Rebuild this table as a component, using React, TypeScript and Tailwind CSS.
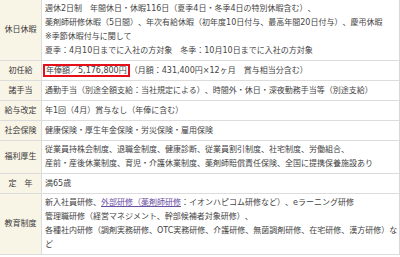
import type { ReactNode } from "react";

type Row = { label: string; body: ReactNode; one?: boolean };

const rows: Row[] = [
  {
    label: "休日休暇",
    body: (
      <>
        週休2日制　年間休日・休暇116日（夏季4日・冬季4日の特別休暇含む）、
        <br />
        薬剤師研修休暇（5日間）、年次有給休暇（初年度10日付与、最高年間20日付与）、慶弔休暇
        <br />
        ※季節休暇付与に関して
        <br />
        夏季：4月10日までに入社の方対象　冬季：10月10日までに入社の方対象
      </>
    ),
  },
  {
    label: "初任給",
    one: true,
    body: (
      <>
        <span className="inline-block -ml-[2px] border-2 border-[#e5101a] px-px leading-[9px]">
          年俸額／5,176,800円
        </span>
        （月額：431,400円×12ヶ月　賞与相当分含む）
      </>
    ),
  },
  {
    label: "諸手当",
    one: true,
    body: "通勤手当（別途全額支給：当社規定による）、時間外・休日・深夜勤務手当等（別途支給）",
  },
  { label: "給与改定", one: true, body: "年1回（4月）賞与なし（年俸に含む）" },
  { label: "社会保険", one: true, body: "健康保険・厚生年金保険・労災保険・雇用保険" },
  {
    label: "福利厚生",
    body: (
      <>
        従業員持株会制度、退職金制度、健康診断、従業員割引制度、社宅制度、労働組合、
        <br />
        産前・産後休業制度、育児・介護休業制度、薬剤師賠償責任保険、全国に提携保養施設あり
      </>
    ),
  },
  { label: "定　年", one: true, body: "満65歳" },
  {
    label: "教育制度",
    body: (
      <>
        新入社員研修、
        <a href="#" className="text-[#6a4fa3] underline">
          外部研修（薬剤師研修
        </a>
        ：イオンハピコム研修など）、eラーニング研修
        <br />
        管理職研修（経営マネジメント、幹部候補者対象研修）、
        <br />
        各種社内研修（調剤実務研修、OTC実務研修、介護研修、無菌調剤研修、在宅研修、漢方研修）な
        <br />
        ど
      </>
    ),
  },
];

export default function App() {
  return (
    <div className="w-[400px] h-[257px] overflow-hidden bg-white font-['DejaVu_Sans','Noto_Sans_CJK_JP',sans-serif] text-[8px] [text-spacing-trim:space-all]">
      <div className="border-r border-[#d8d8d8]">
        {rows.map((r) => (
          <div key={r.label} className="flex border-b border-[#dcdcdc]">
            <div className="w-[42px] shrink-0 bg-[#f8f4e6] border-r border-[#dcdcdc] flex items-center justify-center text-[#3a3a3a]">
              {r.label}
            </div>
            <div
              className={
                r.one
                  ? "flex-1 min-w-0 overflow-hidden px-[3px] py-[2.5px] leading-[14px] text-[#444] whitespace-nowrap"
                  : "flex-1 min-w-0 overflow-hidden px-[3px] py-[2px] leading-[14px] text-[#444] whitespace-nowrap"
              }
            >
              {r.body}
            </div>
          </div>
        ))}
      </div>
    </div>
  );
}
